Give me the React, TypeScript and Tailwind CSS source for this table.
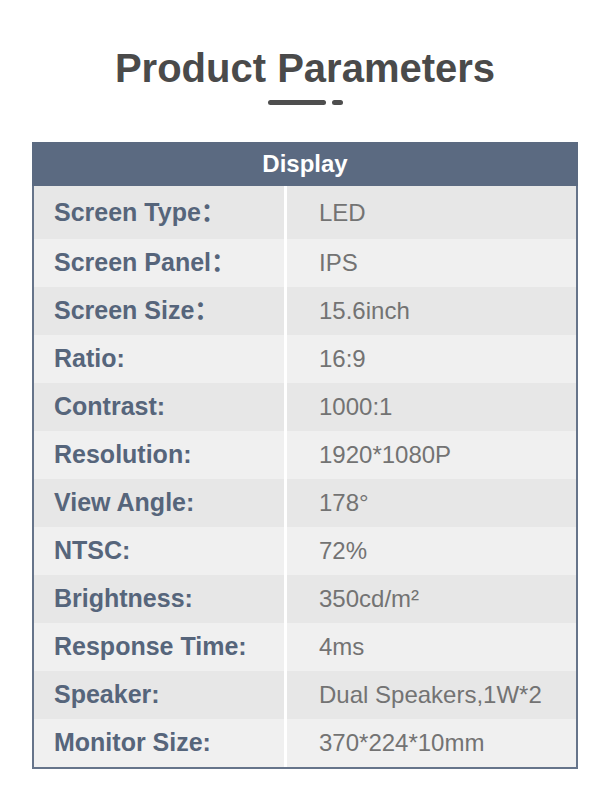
const ROWS: { label: string; value: string }[] = [
  { label: "Screen Type：", value: "LED" },
  { label: "Screen Panel：", value: "IPS" },
  { label: "Screen Size：", value: "15.6inch" },
  { label: "Ratio:", value: "16:9" },
  { label: "Contrast:", value: "1000:1" },
  { label: "Resolution:", value: "1920*1080P" },
  { label: "View Angle:", value: "178°" },
  { label: "NTSC:", value: "72%" },
  { label: "Brightness:", value: "350cd/m²" },
  { label: "Response Time:", value: "4ms" },
  { label: "Speaker:", value: "Dual Speakers,1W*2" },
  { label: "Monitor Size:", value: "370*224*10mm" },
];

function ParamRow({ label, value, index }: { label: string; value: string; index: number }) {
  const dark = index % 2 === 0;
  return (
    <div
      className={
        (index === 0 ? "h-[53px] " : "h-[48px] ") +
        (dark ? "bg-[#e7e7e7] " : "bg-[#f0f0f0] ") +
        "flex items-center"
      }
    >
      <div className="flex h-full w-[253px] items-center border-r-[3px] border-white pl-[20px] text-[25px] font-bold text-[#56657b]">
        {label}
      </div>
      <div className="pl-[32px] text-[24px] text-[#737373]">{value}</div>
    </div>
  );
}

export default function App() {
  return (
    <div
      className="w-[610px] bg-white px-[32px] pb-[32px] pt-[45px]"
      style={{ fontFamily: '"Liberation Sans", Arial, "Noto Sans CJK SC", sans-serif' }}
    >
      <h1 className="text-center text-[40px] font-bold leading-[46px] text-[#4a4a4a]">
        Product Parameters
      </h1>
      <div className="mt-[9px] flex items-center justify-center gap-[6px]">
        <span className="h-[5px] w-[58px] rounded-full bg-[#4e4e4e]" />
        <span className="h-[5px] w-[11px] rounded-full bg-[#4e4e4e]" />
      </div>
      <div className="mt-[37px] border-2 border-t-0 border-[#66748a]">
        <div className="-mx-[2px] flex h-[44px] items-center justify-center bg-[#5b6a81] text-[24px] font-bold text-white">
          Display
        </div>
        {ROWS.map((row, i) => (
          <ParamRow key={row.label} label={row.label} value={row.value} index={i} />
        ))}
      </div>
    </div>
  );
}
